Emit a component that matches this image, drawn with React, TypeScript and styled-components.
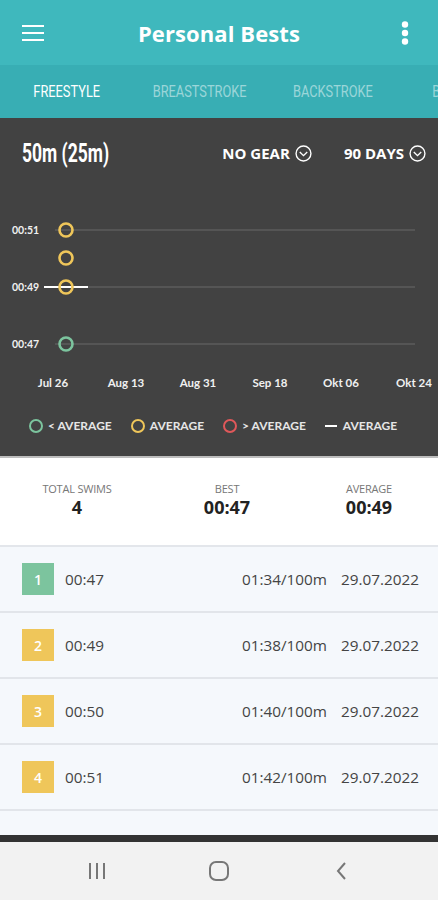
import React from 'react'
import styled, { createGlobalStyle } from 'styled-components'

const GlobalStyle = createGlobalStyle`
  html, body {
    margin: 0;
    padding: 0;
    background: #f5f8fc;
  }
  * { box-sizing: border-box; }
`

const TEAL = '#3fb8bd'
const TEAL_DARK = '#38aeb4'
const GREEN = '#7cc49e'
const YELLOW = '#efc65a'
const RED = '#e0585a'

const Screen = styled.div`
  width: 438px;
  height: 900px;
  display: flex;
  flex-direction: column;
  overflow: hidden;
  font-family: "Open Sans", "Noto Sans", sans-serif;
  background: #f5f8fc;
`

const AppBar = styled.header`
  height: 65px;
  background: ${TEAL};
  display: flex;
  align-items: center;
  justify-content: space-between;
  padding: 0 22px;
`

const Title = styled.h1`
  margin: 0;
  color: #fff;
  font-size: 22px;
  font-weight: 700;
  letter-spacing: 0.1px;
`

const IconButton = styled.div`
  width: 22px;
  display: flex;
  justify-content: center;
`

const TabBar = styled.nav`
  height: 53px;
  background: ${TEAL_DARK};
  display: flex;
  overflow: hidden;
`

const Tab = styled.div<{ $active?: boolean }>`
  flex: 0 0 133px;
  display: flex;
  align-items: center;
  justify-content: center;
  font-family: Roboto, sans-serif;
  font-size: 16px;
  color: ${({ $active }) => ($active ? '#ffffff' : 'rgba(255,255,255,0.5)')};
  white-space: nowrap;
`

// no condensed face installed, so narrow the glyphs by hand
const Narrow = styled.span<{ $scale?: number }>`
  display: inline-block;
  transform: scaleX(${({ $scale }) => $scale ?? 0.8});
`

const ChartSection = styled.section`
  background: #424242;
  border-bottom: 2px solid #bdbdbd;
  display: flex;
  flex-direction: column;
`

const ChartHeader = styled.div`
  height: 70px;
  display: flex;
  align-items: center;
  padding: 0 12px 0 22px;
`

const Distance = styled.div`
  flex: 1;
  font-family: Roboto, sans-serif;
  font-weight: 700;
  color: #fff;
  font-size: 25px;
  line-height: 1;
  span {
    transform-origin: left center;
  }
`

const Filter = styled.div`
  display: flex;
  align-items: center;
  gap: 5px;
  color: #fff;
  font-weight: 700;
  font-size: 15px;
  margin-left: 32px;
`

const Legend = styled.div`
  height: 56px;
  display: flex;
  align-items: center;
  padding: 0 0 5px 29px;
  gap: 19px;
  font-family: Lato, sans-serif;
  font-weight: 700;
  font-size: 12px;
  color: #e6e6e6;
`

const LegendItem = styled.div`
  display: flex;
  align-items: center;
  gap: 5px;
`

const LegendDot = styled.span<{ $color: string }>`
  width: 14px;
  height: 14px;
  border-radius: 50%;
  border: 2.5px solid ${({ $color }) => $color};
`

const LegendDash = styled.span`
  width: 12px;
  height: 2px;
  background: #fff;
  margin-right: 1px;
`

const Stats = styled.section`
  height: 89px;
  background: #fff;
  border-bottom: 2px solid #e3e6eb;
  display: grid;
  grid-template-columns: 154px 146px 1fr;
  align-items: center;
  padding-bottom: 4px;
`

const Stat = styled.div`
  display: flex;
  flex-direction: column;
  align-items: center;
`

const StatLabel = styled.div`
  font-size: 11px;
  color: #777;
  letter-spacing: -0.2px;
`

const StatValue = styled.div`
  font-size: 18px;
  font-weight: 700;
  color: #222;
  line-height: 22px;
`

const List = styled.div`
  flex: 1;
  background: #f5f8fc;
`

const Row = styled.div`
  height: 66px;
  display: flex;
  align-items: center;
  padding: 0 19px 0 22px;
  border-bottom: 2px solid #e2e5ea;
  font-size: 15.3px;
  color: #444;
`

const Badge = styled.div<{ $color: string }>`
  width: 32px;
  height: 32px;
  background: ${({ $color }) => $color};
  color: #fff;
  font-weight: 600;
  font-size: 14px;
  display: flex;
  align-items: center;
  justify-content: center;
  margin-right: 11px;
`

const Time = styled.div`
  flex: 1;
`

const Pace = styled.div`
  margin-right: 14px;
`

const DarkStrip = styled.div`
  height: 7px;
  background: #333;
`

const NavBar = styled.div`
  height: 58px;
  background: #f2f2f2;
  display: flex;
  align-items: center;
  justify-content: center;
`

const NavCell = styled.div`
  width: 122px;
  display: flex;
  justify-content: center;
`

const times = [
  { rank: 1, time: '00:47', pace: '01:34/100m', color: GREEN },
  { rank: 2, time: '00:49', pace: '01:38/100m', color: YELLOW },
  { rank: 3, time: '00:50', pace: '01:40/100m', color: YELLOW },
  { rank: 4, time: '00:51', pace: '01:42/100m', color: YELLOW },
]

const ChevronCircle = () => (
  <svg width="17" height="17" viewBox="0 0 16 16" fill="none" stroke="#fff" strokeWidth="1.3">
    <circle cx="8" cy="8" r="7" />
    <path d="M4.5 6.5 L8 10 L11.5 6.5" />
  </svg>
)

const Chart = () => {
  const grid = [
    { y: 42, label: '00:51' },
    { y: 99, label: '00:49' },
    { y: 156, label: '00:47' },
  ]
  const points = [
    { y: 42, c: YELLOW },
    { y: 70, c: YELLOW },
    { y: 99, c: YELLOW },
    { y: 156, c: GREEN },
  ]
  const xs = [
    { x: 53, l: 'Jul 26' },
    { x: 126, l: 'Aug 13' },
    { x: 198, l: 'Aug 31' },
    { x: 270, l: 'Sep 18' },
    { x: 341, l: 'Okt 06' },
    { x: 414, l: 'Okt 24' },
  ]
  return (
    <svg width="438" height="212" viewBox="0 0 438 212" style={{ display: 'block' }}>
      {grid.map(g => (
        <g key={g.label}>
          <line x1="55" x2="415" y1={g.y} y2={g.y} stroke="#5c5c5c" strokeWidth="1.5" />
          <text x="12" y={g.y + 4} fill="#f0f0f0" fontSize="10.5" fontWeight="700" fontFamily="Lato, sans-serif">
            {g.label}
          </text>
        </g>
      ))}
      <line x1="44" x2="88" y1="99" y2="99" stroke="#fff" strokeWidth="2" />
      {points.map((p, i) => (
        <circle key={i} cx="66" cy={p.y} r="6.5" fill="none" stroke={p.c} strokeWidth="2.6" />
      ))}
      {xs.map(x => (
        <text key={x.l} x={x.x} y="199" textAnchor="middle" fill="#f0f0f0" fontSize="11.5" fontWeight="700" fontFamily="Lato, sans-serif">
          {x.l}
        </text>
      ))}
    </svg>
  )
}

export default function App() {
  return (
    <Screen>
      <GlobalStyle />
      <AppBar>
        <IconButton>
          <svg width="22" height="18" viewBox="0 0 22 18" stroke="#fff" strokeWidth="2">
            <line x1="0" x2="22" y1="2" y2="2" />
            <line x1="0" x2="22" y1="9" y2="9" />
            <line x1="0" x2="22" y1="16" y2="16" />
          </svg>
        </IconButton>
        <Title>Personal Bests</Title>
        <IconButton>
          <svg width="8" height="24" viewBox="0 0 8 24" fill="#fff">
            <circle cx="4" cy="3.5" r="3.2" />
            <circle cx="4" cy="12" r="3.2" />
            <circle cx="4" cy="20.5" r="3.2" />
          </svg>
        </IconButton>
      </AppBar>
      <TabBar>
        <Tab $active><Narrow>FREESTYLE</Narrow></Tab>
        <Tab><Narrow>BREASTSTROKE</Narrow></Tab>
        <Tab><Narrow>BACKSTROKE</Narrow></Tab>
        <Tab><Narrow>BUTTERFLY</Narrow></Tab>
      </TabBar>
      <ChartSection>
        <ChartHeader>
          <Distance><Narrow $scale={0.7}>50m (25m)</Narrow></Distance>
          <Filter>NO GEAR <ChevronCircle /></Filter>
          <Filter>90 DAYS <ChevronCircle /></Filter>
        </ChartHeader>
        <Chart />
        <Legend>
          <LegendItem><LegendDot $color={GREEN} />&lt; AVERAGE</LegendItem>
          <LegendItem><LegendDot $color={YELLOW} />AVERAGE</LegendItem>
          <LegendItem><LegendDot $color={RED} />&gt; AVERAGE</LegendItem>
          <LegendItem><LegendDash />AVERAGE</LegendItem>
        </Legend>
      </ChartSection>
      <Stats>
        <Stat>
          <StatLabel>TOTAL SWIMS</StatLabel>
          <StatValue>4</StatValue>
        </Stat>
        <Stat>
          <StatLabel>BEST</StatLabel>
          <StatValue>00:47</StatValue>
        </Stat>
        <Stat>
          <StatLabel>AVERAGE</StatLabel>
          <StatValue>00:49</StatValue>
        </Stat>
      </Stats>
      <List>
        {times.map(t => (
          <Row key={t.rank}>
            <Badge $color={t.color}>{t.rank}</Badge>
            <Time>{t.time}</Time>
            <Pace>{t.pace}</Pace>
            <div>29.07.2022</div>
          </Row>
        ))}
      </List>
      <DarkStrip />
      <NavBar>
        <NavCell>
          <svg width="20" height="18" viewBox="0 0 20 18" stroke="#777" strokeWidth="2">
            <line x1="3" x2="3" y1="1" y2="17" />
            <line x1="10" x2="10" y1="1" y2="17" />
            <line x1="17" x2="17" y1="1" y2="17" />
          </svg>
        </NavCell>
        <NavCell>
          <svg width="20" height="20" viewBox="0 0 20 20" fill="none" stroke="#777" strokeWidth="2">
            <rect x="1" y="1" width="18" height="18" rx="6" />
          </svg>
        </NavCell>
        <NavCell>
          <svg width="12" height="20" viewBox="0 0 12 20" fill="none" stroke="#777" strokeWidth="2">
            <path d="M10 2 L3 10 L10 18" />
          </svg>
        </NavCell>
      </NavBar>
    </Screen>
  )
}
